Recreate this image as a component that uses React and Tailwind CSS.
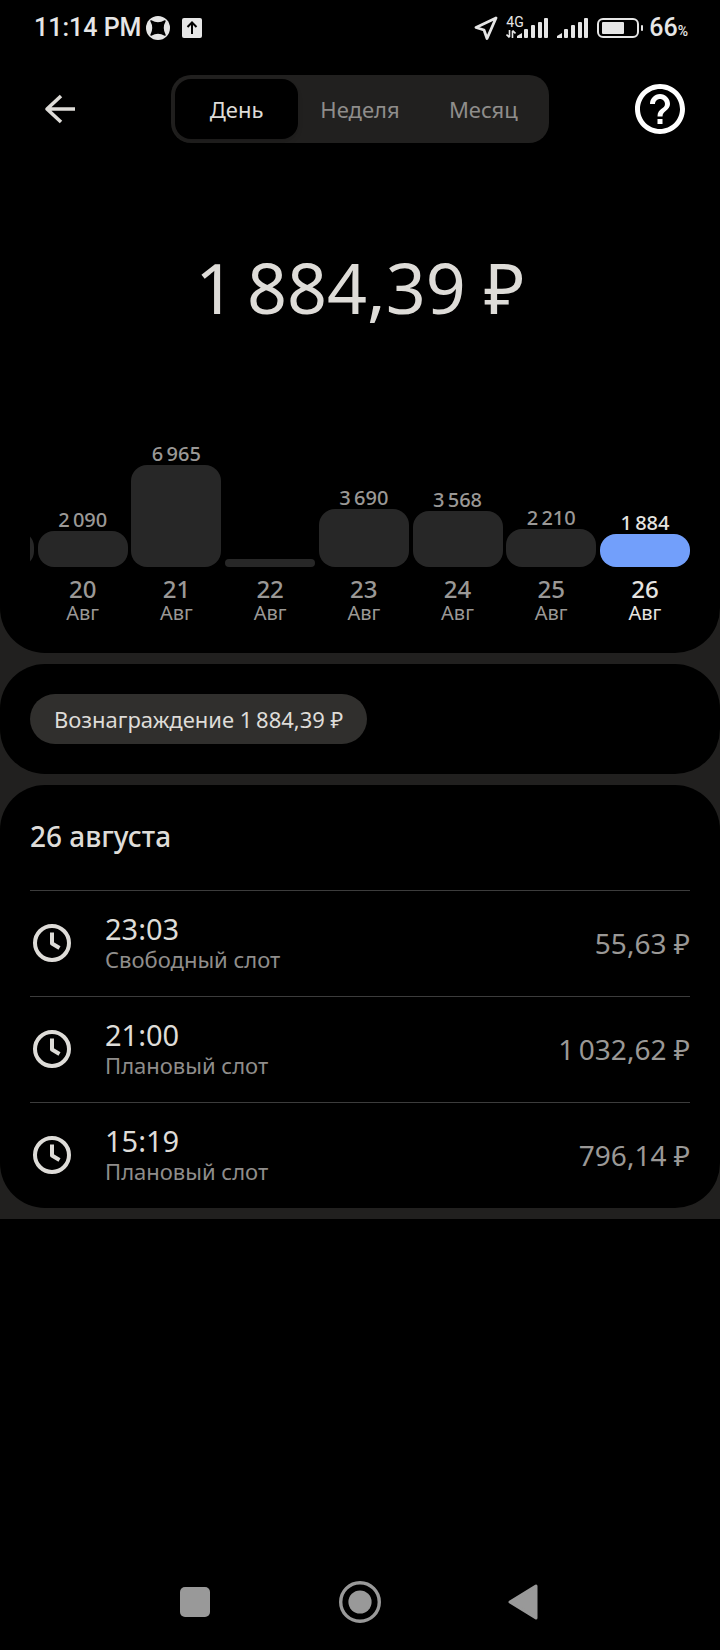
import { useState } from "react";

const TABS = ["День", "Неделя", "Месяц"];

// height is in pixels, the highest bar of the visible range takes 102
const DAYS = [
  { day: 20, month: "Авг", amount: "2 090", height: 36 },
  { day: 21, month: "Авг", amount: "6 965", height: 102 },
  { day: 22, month: "Авг", amount: null, height: 8 },
  { day: 23, month: "Авг", amount: "3 690", height: 58 },
  { day: 24, month: "Авг", amount: "3 568", height: 56 },
  { day: 25, month: "Авг", amount: "2 210", height: 38 },
  { day: 26, month: "Авг", amount: "1 884", height: 33 },
];

const SLOTS = [
  { time: "23:03", name: "Свободный слот", sum: "55,63 ₽" },
  { time: "21:00", name: "Плановый слот", sum: "1\u2009032,62 ₽" },
  { time: "15:19", name: "Плановый слот", sum: "796,14 ₽" },
];

// thousands are separated by a thin space
const thin = (text) => text.replace(" ", "\u2009");

function Signal() {
  return (
    <svg className="h-5 w-8" viewBox="0 0 32 20" fill="#e6e6e6">
      <path d="M0 20v-2l5-3v5z" />
      <rect x="7" y="11" width="4" height="9" rx="1" />
      <rect x="14" y="7" width="4" height="13" rx="1" />
      <rect x="21" y="4" width="4" height="16" rx="1" />
      <rect x="27" y="0" width="4" height="20" rx="1" />
    </svg>
  );
}

function StatusBar() {
  return (
    <div className="flex h-14 items-center justify-between pr-8 pl-[34px] font-['Roboto','Liberation_Sans',sans-serif] text-[#e6e6e6]">
      <div className="flex items-center">
        <span className="text-[25px] leading-8 font-medium">11:14 PM</span>
        <svg className="ml-[5px] size-6" viewBox="0 0 24 24">
          <circle cx="12" cy="12" r="12" fill="#e6e6e6" />
          <path
            d="M5 5q7 4 14 0q-4 7 0 14q-7-4-14 0q4-7 0-14z"
            fill="#000"
            stroke="#000"
            strokeWidth="1.5"
            strokeLinejoin="round"
          />
        </svg>
        <svg className="ml-3 size-5" viewBox="0 0 20 20">
          <rect width="20" height="20" rx="2" fill="#e6e6e6" />
          <path d="M10 16V5M5.500 9L10 4.500L14.500 9" fill="none" stroke="#000" strokeWidth="2" />
        </svg>
      </div>
      <div className="flex items-center">
        <svg className="mr-2 size-6" viewBox="0 0 24 24">
          <path
            d="M22 2L2 11.500L10 14L13 22.500z"
            fill="none"
            stroke="#e6e6e6"
            strokeWidth="2.800"
            strokeLinejoin="round"
          />
        </svg>
        <div className="relative flex items-center pl-[11px]">
          <span className="absolute -top-1 left-0 text-sm leading-4">4G</span>
          <svg className="absolute bottom-0 left-0 h-2 w-2.5" viewBox="0 0 10 8">
            <path
              d="M3.500 0v7M.5 4.500L3.500 7.500M6.500 8V1M9.500 3.500L6.500 .5"
              fill="none"
              stroke="#e6e6e6"
              strokeWidth="1.600"
            />
          </svg>
          <Signal />
        </div>
        <div className="ml-2">
          <Signal />
        </div>
        <svg className="ml-2 h-5 w-12" viewBox="0 0 48 20">
          <rect x="1" y="1" width="40" height="18" rx="5" fill="none" stroke="#e6e6e6" strokeWidth="2" />
          <rect x="5" y="4" width="22" height="12" rx="1" fill="#e6e6e6" />
          <rect x="44" y="7" width="2" height="6" rx="1" fill="#e6e6e6" />
        </svg>
        <span className="ml-1 flex items-baseline">
          <span className="text-[25px] leading-8 font-medium">66</span>
          <span className="text-sm font-medium">%</span>
        </span>
      </div>
    </div>
  );
}

function Header() {
  const [active, setActive] = useState(0);

  return (
    <header className="flex items-center justify-between px-[35px] pt-[19px]">
      <button type="button" aria-label="Назад" className="flex size-[50px] items-center justify-center">
        <svg className="h-[30px] w-8" viewBox="0 0 32 30">
          <path
            d="M31 15H3M17 2L3 15L17 28"
            fill="none"
            stroke="#dedcd8"
            strokeWidth="3.600"
            strokeLinejoin="round"
          />
        </svg>
      </button>
      <div role="tablist" className="grid w-[378px] grid-cols-3 rounded-[20px] bg-[#21201f] p-1">
        {TABS.map((tab, i) => (
          <button
            key={tab}
            type="button"
            role="tab"
            aria-selected={i === active}
            onClick={() => setActive(i)}
            className={
              i === active
                ? "h-[60px] rounded-2xl bg-black text-[22px] text-[#dedcd8] shadow-md"
                : "h-[60px] rounded-2xl text-[22px] text-[#8f8d8b]"
            }
          >
            {tab}
          </button>
        ))}
      </div>
      <button type="button" aria-label="Помощь" className="size-[50px]">
        <svg className="size-full" viewBox="2 2 20 20" fill="#fff">
          <path d="M11 18h2v-2h-2v2zm1-16C6.480 2 2 6.480 2 12s4.480 10 10 10 10-4.480 10-10S17.520 2 12 2zm0 18c-4.410 0-8-3.590-8-8s3.590-8 8-8 8 3.590 8 8-3.590 8-8 8zm0-14c-2.210 0-4 1.790-4 4h2c0-1.100.9-2 2-2s2 .9 2 2c0 2-3 1.750-3 5h2c0-2.250 3-2.500 3-5 0-2.210-1.790-4-4-4z" />
        </svg>
      </button>
    </header>
  );
}

function DayBar({ item, selected, onSelect }) {
  return (
    <button
      type="button"
      onClick={onSelect}
      className={
        selected
          ? "flex w-[90px] flex-col items-center text-[#e6e4e0]"
          : "flex w-[90px] flex-col items-center text-[#9a9896]"
      }
    >
      {item.amount && <span className="text-xl leading-[22px] font-medium">{thin(item.amount)}</span>}
      <span
        className={selected ? "w-full rounded-2xl bg-[#729ffb]" : "w-full rounded-2xl bg-[#272727]"}
        style={{ height: item.height }}
      />
      <span className="mt-2 text-2xl leading-7 font-medium">{item.day}</span>
      <span className="text-xl leading-5">{item.month}</span>
    </button>
  );
}

function Chart() {
  const [selected, setSelected] = useState(26);

  return (
    <div className="mx-[30px] flex items-end justify-between">
      {/* edge of the previous day, the rest is scrolled away */}
      <div className="mb-14 flex w-1 justify-end overflow-hidden">
        <div className="h-9 w-[90px] shrink-0 rounded-2xl bg-[#272727]" />
      </div>
      {DAYS.map((item) => (
        <DayBar
          key={item.day}
          item={item}
          selected={item.day === selected}
          onSelect={() => setSelected(item.day)}
        />
      ))}
    </div>
  );
}

function ClockIcon() {
  return (
    <svg className="size-11 shrink-0" viewBox="0 0 44 44" fill="none" stroke="#dedcd8">
      <circle cx="22" cy="22" r="17" strokeWidth="4" />
      <path d="M22 11.500V22.500L29.500 27" strokeWidth="4" strokeLinejoin="round" />
    </svg>
  );
}

function NavBar() {
  return (
    <nav className="mt-auto flex h-24 items-center justify-center gap-[123px]">
      <button type="button" aria-label="Недавние">
        <svg className="size-[42px]" viewBox="0 0 42 42">
          <rect x="6" y="6" width="30" height="30" rx="5" fill="#999" />
        </svg>
      </button>
      <button type="button" aria-label="Домой">
        <svg className="size-[42px]" viewBox="0 0 42 42">
          <circle cx="21" cy="21" r="19.300" fill="none" stroke="#999" strokeWidth="3.400" />
          <circle cx="21" cy="21" r="11.600" fill="#999" />
        </svg>
      </button>
      <button type="button" aria-label="Назад">
        <svg className="size-[42px]" viewBox="0 0 42 42">
          <path d="M6 21L32 5V37z" fill="#999" stroke="#999" strokeWidth="3" strokeLinejoin="round" />
        </svg>
      </button>
    </nav>
  );
}

export default function App() {
  return (
    <div className="flex min-h-screen flex-col bg-black font-['Noto_Sans','Open_Sans',sans-serif] text-[#dedcd8]">
      <div className="flex flex-col gap-[11px] bg-[#21201f] pb-[11px]">
        <section className="rounded-b-[45px] bg-black pb-[30px]">
          <StatusBar />
          <Header />
          <h1 className="pt-[94px] pb-[106px] text-center text-[70px] leading-[100px]">
            {thin("1 884,39 ₽")}
          </h1>
          <Chart />
        </section>

        <section className="rounded-[45px] bg-black p-[30px]">
          <button
            type="button"
            className="h-[50px] rounded-full bg-[#302f2d] px-6 text-[22px]"
          >
            Вознаграждение {thin("1 884,39 ₽")}
          </button>
        </section>

        <section className="rounded-[45px] bg-black px-[30px]">
          <h2 className="pt-[31px] pb-[34px] text-[28px] leading-10 font-medium">26 августа</h2>
          <ul>
            {SLOTS.map((slot) => (
              <li
                key={slot.time}
                className="flex h-[106px] items-center border-t border-[#3c3c3c] pb-0.5"
              >
                <ClockIcon />
                <div className="ml-[31px] flex-1">
                  <div className="text-[29px] leading-8">{slot.time}</div>
                  <div className="text-[22px] leading-7 text-[#8f8d8b]">{slot.name}</div>
                </div>
                <div className="text-[28px] text-[#9a9896]">{slot.sum}</div>
              </li>
            ))}
          </ul>
        </section>
      </div>

      <NavBar />
    </div>
  );
}
